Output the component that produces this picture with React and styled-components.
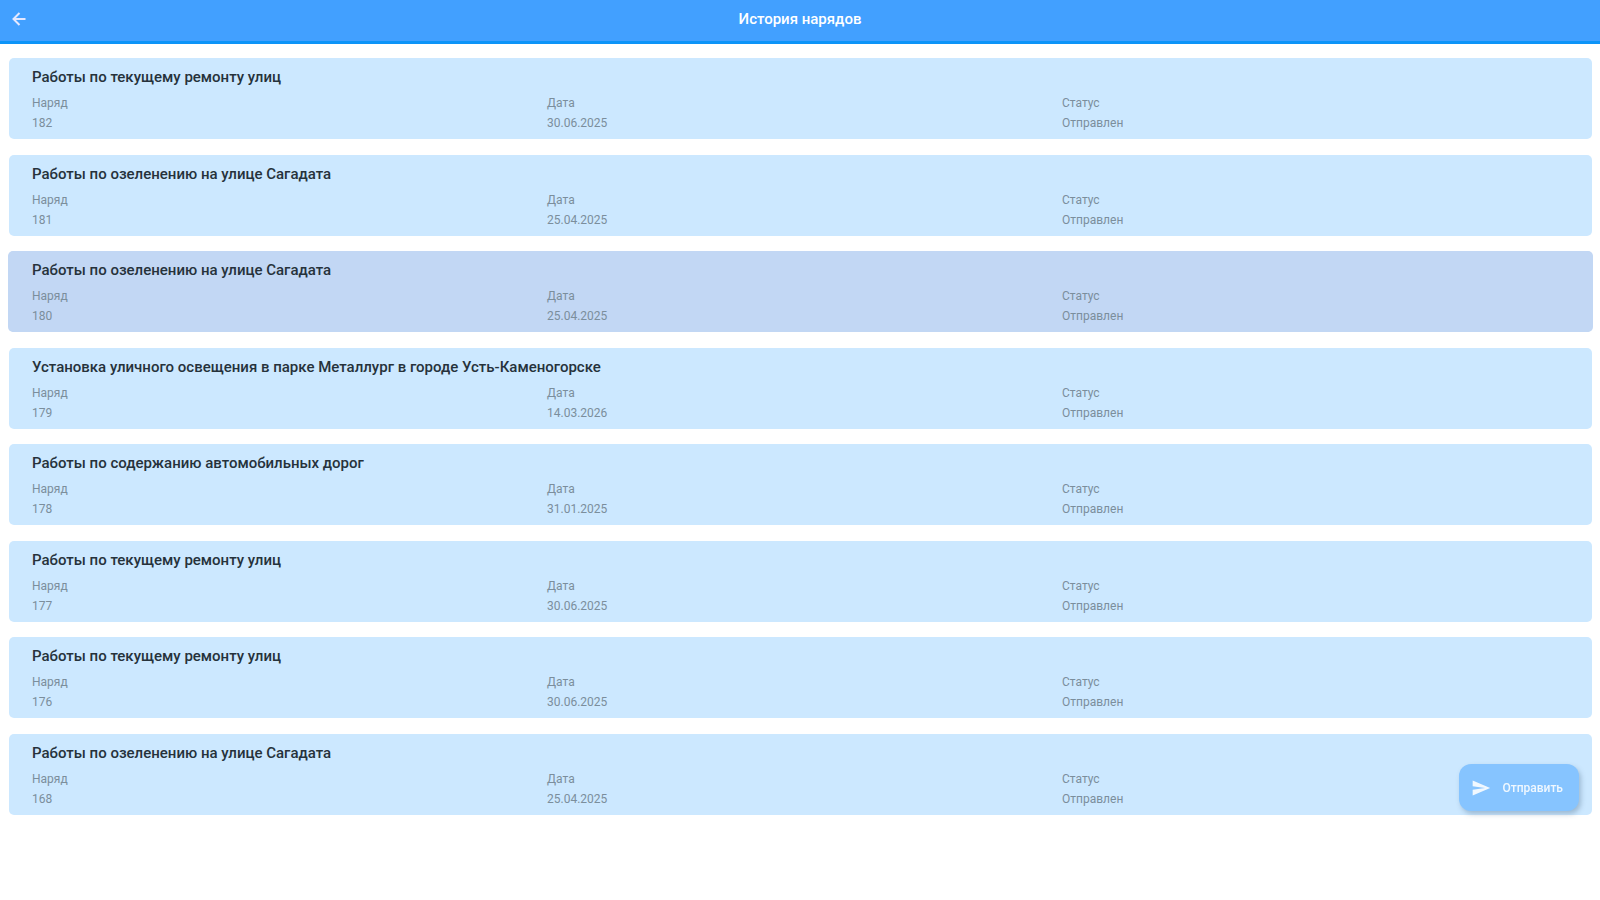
import React, {useState} from 'react'
import styled, {createGlobalStyle} from 'styled-components'
import {MdSend} from 'react-icons/md'

const initialOrders = [
  {number: 182, title: 'Работы по текущему ремонту улиц', date: '30.06.2025', status: 'Отправлен'},
  {number: 181, title: 'Работы по озеленению на улице Сагадата', date: '25.04.2025', status: 'Отправлен'},
  {number: 180, title: 'Работы по озеленению на улице Сагадата', date: '25.04.2025', status: 'Отправлен'},
  {number: 179, title: 'Установка уличного освещения в парке Металлург в городе Усть-Каменогорске', date: '14.03.2026', status: 'Отправлен'},
  {number: 178, title: 'Работы по содержанию автомобильных дорог', date: '31.01.2025', status: 'Отправлен'},
  {number: 177, title: 'Работы по текущему ремонту улиц', date: '30.06.2025', status: 'Отправлен'},
  {number: 176, title: 'Работы по текущему ремонту улиц', date: '30.06.2025', status: 'Отправлен'},
  {number: 168, title: 'Работы по озеленению на улице Сагадата', date: '25.04.2025', status: 'Отправлен'}
]

function ArrowBack() {
  return (
    <svg width="14" height="14" viewBox="0 0 14 14" fill="none" stroke="currentColor" strokeWidth="2">
      <path d="M13.5 7H2M7.5 1L1.5 7l6 6" />
    </svg>
  )
}

function OrderCard({order, selected, click}) {
  return (
    <StyledCard type="button" aria-pressed={selected} $selected={selected} onClick={click}>
      <StyledName>{order.title}</StyledName>
      <StyledFields>
        <StyledField>
          <span>Наряд</span>
          <span>{order.number}</span>
        </StyledField>
        <StyledField>
          <span>Дата</span>
          <span>{order.date}</span>
        </StyledField>
        <StyledField>
          <span>Статус</span>
          <span>{order.status}</span>
        </StyledField>
      </StyledFields>
    </StyledCard>
  )
}

function App() {
  const [selected, setSelected] = useState(180)

  return (
    <StyledPage>
      <GlobalStyle />
      <StyledHeader>
        <StyledBack type="button" aria-label="Назад">
          <ArrowBack />
        </StyledBack>
        <StyledTitle>История нарядов</StyledTitle>
      </StyledHeader>
      <StyledList>
        {initialOrders.map((order) => (
          <li key={order.number}>
            <OrderCard
              order={order}
              selected={order.number === selected}
              click={() => setSelected(order.number)}
            />
          </li>
        ))}
      </StyledList>
      <StyledSend type="button">
        <MdSend size={20} />
        Отправить
      </StyledSend>
    </StyledPage>
  )
}

const GlobalStyle = createGlobalStyle`
  * {
    box-sizing: border-box;
  }

  body {
    margin: 0;
    background-color: #ffffff;
    font-family: Roboto, "Liberation Sans", sans-serif;
  }

  button {
    border: none;
    font-family: inherit;
    cursor: pointer;
  }
`

const StyledPage = styled.div`
  min-height: 100vh;
  display: flex;
  flex-direction: column;
`

const StyledHeader = styled.header`
  display: grid;
  grid-template-columns: 40px 1fr 40px;
  align-items: center;
  height: 44px;
  padding-bottom: 4px;
  background-color: #42a0ff;
  border-bottom: 3px solid #0c94f8;
  color: #ffffff;
`

const StyledBack = styled.button`
  display: flex;
  padding: 0 12px;
  background: none;
  color: #e4e8ff;
`

const StyledTitle = styled.h1`
  margin: 0;
  font-size: 15px;
  line-height: 20px;
  font-weight: 500;
  text-align: center;
`

const StyledList = styled.ul`
  flex: 1;
  display: flex;
  flex-direction: column;
  justify-content: space-between;
  gap: 15px;
  margin: 0;
  padding: 14px 8px 85px 9px;
  list-style: none;
`

const StyledCard = styled.button`
  display: block;
  width: 100%;
  padding: 9px 15px 6px 23px;
  border-radius: 5px;
  background-color: ${(props) => (props.$selected ? '#c2d7f4' : '#cce8ff')};
  box-shadow: ${(props) => (props.$selected ? '-1px 0 #c2d7f4, 1px 0 #c2d7f4' : 'none')};
  text-align: left;
`

const StyledName = styled.div`
  font-size: 15px;
  line-height: 20px;
  font-weight: 500;
  color: #26323b;
`

const StyledFields = styled.div`
  display: grid;
  grid-template-columns: repeat(3, 1fr);
  margin-top: 6px;
`

const StyledField = styled.div`
  display: flex;
  flex-direction: column;
  font-size: 12px;
  line-height: 20px;
  color: #7b8e9c;
`

const StyledSend = styled.button`
  position: fixed;
  right: 21px;
  bottom: 89px;
  display: flex;
  align-items: center;
  gap: 11px;
  height: 47px;
  padding: 0 16px 0 12px;
  border-radius: 12px;
  background-color: #86c4ff;
  box-shadow: 2px 3px 5px rgba(70, 100, 130, 0.35);
  font-size: 12px;
  font-weight: 500;
  color: #f0f8ff;
`

export default App
